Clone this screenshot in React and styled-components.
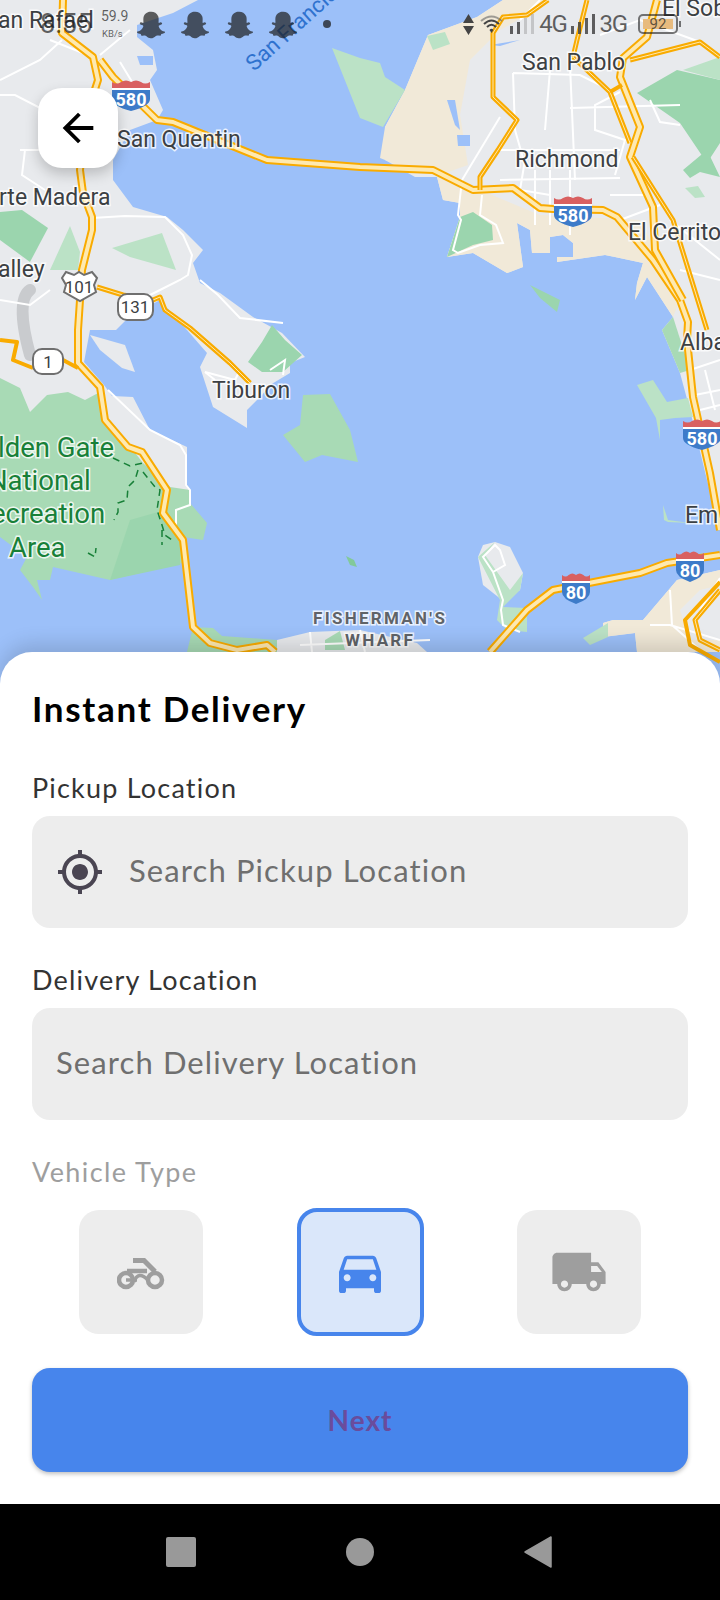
import React from "react";
import styled, { createGlobalStyle } from "styled-components";
import { FaSnapchatGhost } from "react-icons/fa";
import {
  MdArrowBack,
  MdGpsFixed,
  MdDirectionsCar,
  MdLocalShipping,
} from "react-icons/md";

const GlobalStyle = createGlobalStyle`
  html, body { margin: 0; padding: 0; background: #fff; }
  * { box-sizing: border-box; }
`;

const WATER = "#9cc0f9";
const LAND = "#e8eaed";
const SAND = "#f1e9d8";
const GREEN = "#a8dab5";
const GREEN_LIGHT = "#bbe2c6";
const GREEN_DARK = "#9bd5ae";

const landShapes = [
  "M0,0 L198,0 173,13 137,25 137,37 153,50 157,70 150,80 163,110 157,120 130,130 113,160 113,180 133,207 167,217 183,230 203,250 193,263 200,283 220,293 253,317 282,333 305,357 290,363 290,373 270,385 262,395 247,410 247,428 213,407 200,367 207,353 187,330 160,300 130,316 116,330 90,330 84,362 104,385 112,396 133,397 150,430 187,447 187,487 190,490 190,503 80,520 0,400 Z",
  "M90,335 L125,345 135,372 122,368 100,350 Z",
  "M503,0 L720,0 720,530 707,480 690,410 680,373 662,330 673,317 647,277 635,300 637,283 643,263 615,257 605,255 557,262 557,257 573,257 573,243 563,235 550,237 550,253 532,253 530,230 517,223 523,267 507,273 473,253 447,257 460,217 460,203 443,200 437,177 415,177 385,160 385,127 405,90 428,35 477,17 Z",
  "M720,570 L677,580 643,620 613,620 603,623 603,637 635,633 637,652 720,652 Z",
  "M478,557 L483,545 495,542 510,547 523,573 520,590 502,600 483,585 Z",
  "M277,640 L310,632 360,630 417,643 427,652 277,652 Z",
];

const sandShapes = [
  "M503,0 L548,0 527,15 500,30 470,60 460,115 468,165 440,175 415,172 380,158 385,127 405,90 428,35 477,17 Z",
  "M437,177 L480,190 540,215 640,220 680,300 673,317 647,277 635,300 637,283 643,263 615,257 605,255 557,262 557,257 573,257 573,243 563,235 550,237 550,253 532,253 530,230 517,223 523,267 507,273 473,253 447,257 460,217 460,203 443,200 Z",
  "M720,570 L677,580 643,620 613,620 603,623 603,637 635,633 637,652 720,652 720,640 690,640 680,610 700,590 720,585 Z",
];

const greenShapes = [
  ["M0,378 L20,388 30,412 47,395 68,392 85,400 100,392 105,420 125,440 143,463 170,487 190,490 190,503 207,523 203,540 183,537 182,563 110,580 53,567 50,580 37,580 42,600 33,587 20,570 27,557 0,537 Z", GREEN],
  ["M130,520 L165,510 180,540 180,565 110,580 120,550 Z", GREEN_DARK],
  ["M302,355 L283,372 262,372 248,362 262,342 272,325 285,340 Z", GREEN_DARK],
  ["M303,395 L330,394 350,430 358,462 322,455 305,462 283,435 300,425 Z", GREEN],
  ["M112,248 L162,233 176,270 130,257 Z", GREEN_LIGHT],
  ["M50,270 L70,226 80,252 78,270 Z", GREEN_LIGHT],
  ["M0,212 L22,210 48,228 30,262 0,240 Z", GREEN_DARK],
  ["M332,48 L360,58 380,63 385,77 405,90 383,127 360,118 Z", GREEN_LIGHT],
  ["M427,36 L445,32 450,44 433,50 Z", GREEN_LIGHT],
  ["M460,217 L473,212 492,225 493,240 473,245 447,257 Z", GREEN_DARK],
  ["M637,93 L677,70 720,80 720,143 707,163 680,123 Z", GREEN_DARK],
  ["M683,70 L720,57 720,80 Z", GREEN_LIGHT],
  ["M683,170 L707,150 720,177 700,172 690,178 Z", GREEN_DARK],
  ["M685,188 L698,186 705,197 695,198 Z", GREEN_LIGHT],
  ["M530,285 L560,300 557,312 540,298 Z", GREEN_DARK],
  ["M637,385 L653,380 667,402 688,398 693,417 675,418 660,420 660,440 656,418 Z", GREEN_LIGHT],
  ["M662,330 L673,317 690,370 680,373 Z", GREEN],
  ["M663,505 L668,520 690,523 668,522 664,520 Z", GREEN_LIGHT],
  ["M478,557 L495,542 485,555 510,590 523,573 520,590 503,607 527,608 527,632 507,630 497,620 500,600 Z", GREEN_LIGHT],
  ["M583,638 L608,623 608,637 590,645 Z", GREEN_LIGHT],
  ["M187,652 L193,627 213,628 222,636 277,640 277,652 Z", GREEN],
  ["M325,640 L340,631 345,650 325,650 Z", GREEN],
  ["M346,556 L354,560 357,567 350,565 Z", "#82c99a"],
];

const waterPatches = [
  "M137,56 L153,56 153,65 140,65 Z",
  "M457,135 L470,135 470,146 458,146 Z",
  "M447,100 L455,100 460,130 455,125 Z",
  "M490,45 L520,40 500,46 Z",
];

const whiteRoads = [
  "M0,95 L15,95 40,108 75,105 M20,150 L85,150 M25,150 L22,175 45,190 M0,80 L40,60 62,40 M50,40 L93,57 M62,0 L60,30 M130,30 L100,55 M120,62 L137,90",
  "M92,218 L125,216 165,217 183,235 192,255 188,275 180,280 160,290 130,305",
  "M200,280 L218,295 240,318 283,323 M0,300 L30,305 50,290",
  "M205,372 L235,380 240,370 M108,390 L150,430 180,445 186,455 186,485 190,490 190,505 176,510 176,530",
  "M540,0 L520,20 M600,35 L640,20 700,42",
  "M513,73 L515,130 M513,73 L580,75 610,90 M550,70 L545,130 M570,108 L680,105 M570,65 L575,180 M620,92 L595,105 595,130 625,140 615,175 M515,130 L525,165 M525,160 L520,190 550,195 M495,150 L620,150 M500,180 L620,178 M535,170 L535,225 M550,170 L550,225 M570,170 L570,235 M610,195 L650,195",
  "M500,117 L462,180 M462,180 L458,215 461,220 453,250 458,253 480,245 503,243 496,225 480,215 482,195",
  "M650,100 L660,122 680,125 M670,220 L720,260 M620,220 L660,205 M680,270 L720,280",
  "M690,370 L720,360 M695,395 L720,390 M705,370 L715,410 M700,410 L720,405",
  "M495,545 L483,557 493,572 505,565 500,550 Z M493,572 L503,600 501,610 503,625 520,632",
  "M720,578 L700,610 M650,625 L670,625 720,640 M670,590 L672,625 700,650",
  "M205,372 L215,380 M270,370 L285,360 283,375",
  "M300,645 L430,640 M310,632 L312,652 M360,630 L365,652",
];

const faintRoads = ["M30,290 Q15,300 30,355"];

const highways = [
  ["M63,0 L62,33 93,57 98,80 85,120 80,170 83,193 92,217 92,230 82,270 78,330 78,363 100,387 105,420 128,447 142,452 167,490 163,513 183,540 193,627 210,643 237,650 267,645 275,652", 8],
  ["M100,60 L113,77 157,120 173,122 200,133 267,160 360,167 433,170 473,190 513,188 540,208 553,209 603,210 617,217 653,260 680,300 688,322 687,340 693,397 710,473 720,530", 8],
  ["M657,0 L647,37 623,58 620,77 640,127 630,157 653,207 655,250 683,300", 8],
  ["M630,60 L700,42 720,57", 5],
  ["M573,57 L610,92 630,143", 5],
  ["M587,0 L577,40 573,57", 5],
  ["M633,157 L673,220 707,330", 5],
  ["M548,0 L527,15 503,17 493,33 493,97 517,120 498,150 480,177 480,190", 5],
  ["M97,287 L123,295 153,300 160,297 165,310 190,328 230,363 250,383", 5],
  ["M0,340 L17,342 13,360 33,368 M63,360 L78,368", 4],
  ["M490,652 L527,610 553,590 640,573 667,563 720,555", 8],
  ["M720,590 L695,620 700,640 720,650", 5],
  ["M720,582 L685,620 690,645 720,662", 4],
  ["M610,92 L622,85", 4],
];

const placeLabels = [
  ["an Rafael", -2, 28],
  ["San Quentin", 117, 147],
  ["rte Madera", -1, 205],
  ["alley", -2, 277],
  ["Tiburon", 212, 398],
  ["San Pablo", 522, 70],
  ["Richmond", 515, 167],
  ["El Cerrito", 628, 240],
  ["El Sob", 662, 16],
  ["Alba", 680, 350],
  ["Em", 685, 523],
];

const parkLabels = [
  ["lden Gate", -2, 457],
  ["National", -12, 490],
  ["ecreation", -9, 523],
  ["Area", 9, 557],
];

const trailPaths = [
  "M113,458 L130,466 143,463 M138,470 L135,480 128,487 127,500 118,503 118,512 114,520 M143,472 L155,487 160,490 157,510 162,525 165,535 175,542 M162,530 L162,545 M88,553 L95,557 96,548",
];

const MapFrame = styled.div`
  height: 684px;
  background: ${WATER};
  overflow: hidden;
`;

const MapCanvas = styled.svg`
  display: block;
  width: 720px;
  height: 684px;
`;

const PlaceText = styled.text`
  font-family: Roboto, sans-serif;
  font-size: 23px;
  fill: #3c4043;
  stroke: rgba(255, 255, 255, 0.8);
  stroke-width: 3px;
  paint-order: stroke;
`;

const ParkText = styled(PlaceText)`
  font-size: 27.5px;
  fill: #188038;
`;

const BayText = styled(PlaceText)`
  font-size: 22px;
  fill: #2f72cf;
  stroke: none;
`;

const DistrictText = styled(PlaceText)`
  font-size: 17px;
  font-weight: 700;
  letter-spacing: 2.3px;
  fill: #5f6368;
`;

const ShieldText = styled.text`
  font-family: Roboto, sans-serif;
  font-size: 18px;
  font-weight: 700;
  fill: #fff;
  text-anchor: middle;
`;

const RouteText = styled(ShieldText)`
  font-weight: 400;
  fill: #3c4043;
  font-size: 17px;
`;

const Highway = ({ d, width }) => (
  <>
    <path d={d} fill="none" stroke="#f9ab00" strokeWidth={width} strokeLinejoin="round" />
    <path d={d} fill="none" stroke="#fee9b0" strokeWidth={width - 4} strokeLinejoin="round" />
  </>
);

const Interstate = ({ x, y, width, label }) => (
  <g transform={`translate(${x} ${y})`}>
    <g transform={`scale(${width / 38} 1)`}>
      <path d="M0,9 L0,3 Q5,6 9,3 Q14,0 19,3 Q24,0 29,3 Q33,6 38,3 L38,9 Z" fill="#d96060" />
      <rect x="0" y="9" width="38" height="2" fill="#fff" />
      <path d="M0,11 H38 V20 Q38,27 19,32 Q0,27 0,20 Z" fill="#3d7bc9" />
    </g>
    <ShieldText x={width / 2} y={27}>{label}</ShieldText>
  </g>
);

const RoadMap = () => (
  <MapCanvas viewBox="0 0 720 684">
    {landShapes.map((d, i) => <path key={i} d={d} fill={LAND} />)}
    {sandShapes.map((d, i) => <path key={i} d={d} fill={SAND} />)}
    {greenShapes.map(([d, fill], i) => <path key={i} d={d} fill={fill} />)}
    {waterPatches.map((d, i) => <path key={i} d={d} fill={WATER} />)}
    {faintRoads.map((d, i) => (
      <path key={i} d={d} fill="none" stroke="#c9cbce" strokeWidth="12" strokeLinecap="round" />
    ))}
    {whiteRoads.map((d, i) => (
      <path key={i} d={d} fill="none" stroke="#fff" strokeWidth="2" />
    ))}
    {trailPaths.map((d, i) => (
      <path key={i} d={d} fill="none" stroke="#188038" strokeWidth="1.5" strokeDasharray="7 5" />
    ))}
    {highways.map(([d, width], i) => <Highway key={i} d={d} width={width} />)}

    <Interstate x={112} y={79} width={38} label="580" />
    <Interstate x={554} y={195} width={38} label="580" />
    <Interstate x={683} y={418} width={38} label="580" />
    <Interstate x={562} y={572} width={28} label="80" />
    <Interstate x={676} y={550} width={28} label="80" />

    <path d="M66,272 L74,275 79,272 84,275 92,272 97,278 94,285 96,292 80,301 64,292 66,285 62,278 Z" fill="#fff" stroke="#6f6f6f" strokeWidth="2" />
    <RouteText x="79" y="293">101</RouteText>
    <rect x="118" y="294" width="35" height="26" rx="9" fill="#fff" stroke="#6f6f6f" strokeWidth="2" />
    <RouteText x="135" y="313">131</RouteText>
    <rect x="33" y="349" width="30" height="25" rx="9" fill="#fff" stroke="#6f6f6f" strokeWidth="2" />
    <RouteText x="48" y="368">1</RouteText>

    {placeLabels.map(([label, x, y]) => <PlaceText key={label} x={x} y={y}>{label}</PlaceText>)}
    {parkLabels.map(([label, x, y]) => <ParkText key={label} x={x} y={y}>{label}</ParkText>)}
    <BayText transform="translate(254 72) rotate(-42)">San Francisco</BayText>
    <DistrictText x="313" y="624">FISHERMAN'S</DistrictText>
    <DistrictText x="345" y="646">WHARF</DistrictText>
  </MapCanvas>
);

const Screen = styled.div`
  position: relative;
  width: 720px;
  height: 1600px;
  overflow: hidden;
  font-family: Lato, "Noto Sans", sans-serif;
`;

const StatusBar = styled.div`
  position: absolute;
  top: 0;
  left: 0;
  width: 720px;
  height: 48px;
  padding: 0 40px;
  display: flex;
  align-items: center;
  font-family: Roboto, sans-serif;
  color: rgba(30, 30, 30, 0.7);
`;

const Clock = styled.span`
  font-size: 27px;
  width: 61px;
  margin-top: -1px;
`;

const Speed = styled.div`
  width: 36px;
  display: flex;
  flex-direction: column;
  align-items: flex-start;
  font-size: 14px;
  line-height: 16px;
  gap: 4px;
  small {
    font-size: 9.5px;
    line-height: 12px;
    margin-left: 1px;
  }
`;

const Ghosts = styled.div`
  display: flex;
  gap: 16px;
  font-size: 28px;
  padding-top: 2px;
`;

const Dot = styled.span`
  width: 8px;
  height: 8px;
  border-radius: 50%;
  margin-left: 26px;
  background: rgba(30, 30, 30, 0.75);
`;

const StatusRight = styled.div`
  margin-left: auto;
  margin-right: 2px;
  display: flex;
  align-items: center;
  gap: 3px;
  font-size: 24px;
  letter-spacing: -1.2px;
`;

const GlyphSlot = styled.span`
  display: flex;
  margin-right: 3px;
`;

const BatteryBox = styled.span`
  position: relative;
  width: 40px;
  height: 20px;
  margin-left: 8px;
  border: 2px solid rgba(30, 30, 30, 0.6);
  border-radius: 5px;
  font-size: 15px;
  line-height: 16px;
  letter-spacing: 0;
  text-align: center;
  background: linear-gradient(#e8bb7e, #e8bb7e) no-repeat 3px 3px / 30px 10px;
  &::after {
    content: "";
    position: absolute;
    right: -5px;
    top: 5px;
    width: 2px;
    height: 6px;
    background: rgba(30, 30, 30, 0.6);
  }
`;

const BackButton = styled.button`
  position: absolute;
  top: 88px;
  left: 38px;
  width: 80px;
  height: 80px;
  border: none;
  padding: 0;
  border-radius: 24px;
  background: #fff;
  color: #000;
  font-size: 46px;
  display: flex;
  align-items: center;
  justify-content: center;
  box-shadow: 0 6px 14px rgba(0, 0, 0, 0.2);
`;

const Sheet = styled.section`
  position: relative;
  height: 852px;
  margin-top: -32px;
  padding: 34px 32px 0 32px;
  background: #fff;
  border-radius: 32px 32px 0 0;
  box-shadow: 0 -8px 20px rgba(0, 0, 0, 0.14);
`;

const Title = styled.h1`
  margin: 0 0 40px;
  font-size: 35px;
  line-height: 44px;
  font-weight: 700;
  letter-spacing: 1.7px;
  color: #000;
`;

const FieldLabel = styled.div`
  font-size: 27px;
  line-height: 36px;
  letter-spacing: ${(p) => (p.$muted ? "1.4px" : "1.2px")};
  color: ${(p) => (p.$muted ? "#9e9e9e" : "#333")};
  margin-bottom: ${(p) => (p.$muted ? "18px" : "10px")};
`;

const Field = styled.div`
  height: 112px;
  margin-bottom: 34px;
  padding: 0 24px 4px;
  display: flex;
  align-items: center;
  gap: 25px;
  border-radius: 18px;
  background: #ededed;
  font-size: 31px;
  letter-spacing: 1.1px;
  color: #6f6f6f;
  svg {
    color: #4a4552;
    flex: none;
    margin-top: 4px;
  }
`;

const VehicleRow = styled.div`
  display: flex;
  align-items: center;
  justify-content: space-between;
  padding: 0 47px;
`;

const VehicleTile = styled.div`
  width: ${(p) => (p.$active ? "127px" : "124px")};
  height: ${(p) => (p.$active ? "128px" : "124px")};
  display: flex;
  align-items: center;
  justify-content: center;
  border-radius: 20px;
  background: ${(p) => (p.$active ? "#dae7fa" : "#ededed")};
  border: ${(p) => (p.$active ? "4px solid #4785ec" : "none")};
  color: ${(p) => (p.$active ? "#4785ec" : "#9e9e9e")};
`;

const BikeIcon = styled.svg`
  width: 48px;
  height: 32px;
  margin-top: 4px;
`;

const NextButton = styled.button`
  display: block;
  width: 100%;
  height: 104px;
  margin-top: 32px;
  border: none;
  border-radius: 18px;
  background: #4785ec;
  color: #6a4c9c;
  font-family: inherit;
  font-size: 28px;
  font-weight: 700;
  letter-spacing: 1px;
  box-shadow: 0 2px 4px rgba(0, 0, 0, 0.25);
`;

const NavBar = styled.nav`
  position: relative;
  height: 96px;
  background: #000;
  display: flex;
  align-items: center;
  justify-content: center;
  gap: 150px;
  padding-right: 3px;
`;

const NavSquare = styled.span`
  width: 30px;
  height: 30px;
  border-radius: 2px;
  background: #999;
`;

const NavCircle = styled.span`
  width: 28px;
  height: 28px;
  border-radius: 50%;
  background: #999;
`;

const Scooter = () => (
  <BikeIcon viewBox="0 0 48 32" fill="none" stroke="currentColor">
    <path d="M16,2.5 H27 L38,13.5" strokeWidth="5" />
    <path d="M10,13 H30" strokeWidth="4.5" />
    <circle cx="9" cy="22" r="7" strokeWidth="4.5" />
    <circle cx="38" cy="22" r="7" strokeWidth="4.5" />
    <path d="M9,22 H20" strokeWidth="3.5" />
    <path d="M17,24 Q21,12 31,22" strokeWidth="3.5" />
  </BikeIcon>
);

const SignalBars = ({ faint }) => (
  <svg width="27" height="20" viewBox="0 0 27 20">
    <rect x="1" y="12" width="3" height="8" fill="#444" opacity="0.85" />
    <rect x="8" y="8" width="3" height="12" fill="#444" opacity="0.85" />
    <rect x="15" y="4" width="3" height="16" fill={faint ? "#999" : "#444"} opacity={faint ? 0.45 : 0.85} />
    <rect x="22" y="0" width="3" height="20" fill={faint ? "#999" : "#444"} opacity={faint ? 0.45 : 0.85} />
  </svg>
);

const WifiGlyph = () => (
  <svg width="23" height="19" viewBox="0 0 23 19">
    <path d="M1,6 Q11.5,-3 22,6" fill="none" stroke="#666" strokeOpacity="0.6" strokeWidth="2" />
    <path d="M4,9 Q11.5,2 19,9" fill="none" stroke="#444" strokeWidth="2" />
    <path d="M7,12 Q11.5,7.5 16,12" fill="none" stroke="#444" strokeWidth="2" />
    <path d="M9.5,15 Q11.5,12.5 13.5,15 L11.5,18 Z" fill="#444" />
  </svg>
);

const DataArrows = () => (
  <svg width="11" height="21" viewBox="0 0 11 21">
    <path d="M5.5,0 L11,9 H0 Z M0,12 H11 L5.5,21 Z" fill="#444" />
  </svg>
);

const App = () => (
  <>
    <GlobalStyle />
    <Screen>
      <MapFrame>
        <RoadMap />
      </MapFrame>

      <StatusBar>
        <Clock>8:55</Clock>
        <Speed>
          59.9
          <small>KB/s</small>
        </Speed>
        <Ghosts>
          <FaSnapchatGhost />
          <FaSnapchatGhost />
          <FaSnapchatGhost />
          <FaSnapchatGhost />
        </Ghosts>
        <Dot />
        <StatusRight>
          <GlyphSlot>
            <DataArrows />
          </GlyphSlot>
          <GlyphSlot>
            <WifiGlyph />
          </GlyphSlot>
          <SignalBars faint />
          <span>4G</span>
          <SignalBars />
          <span>3G</span>
          <BatteryBox>92</BatteryBox>
        </StatusRight>
      </StatusBar>

      <BackButton aria-label="Back">
        <MdArrowBack />
      </BackButton>

      <Sheet>
        <Title>Instant Delivery</Title>
        <FieldLabel>Pickup Location</FieldLabel>
        <Field>
          <MdGpsFixed size={48} />
          Search Pickup Location
        </Field>
        <FieldLabel>Delivery Location</FieldLabel>
        <Field>Search Delivery Location</Field>
        <FieldLabel $muted>Vehicle Type</FieldLabel>
        <VehicleRow>
          <VehicleTile>
            <Scooter />
          </VehicleTile>
          <VehicleTile $active>
            <MdDirectionsCar size={56} />
          </VehicleTile>
          <VehicleTile>
            <MdLocalShipping size={58} />
          </VehicleTile>
        </VehicleRow>
        <NextButton>Next</NextButton>
      </Sheet>

      <NavBar>
        <NavSquare />
        <NavCircle />
        <svg width="28" height="32" viewBox="0 0 28 32">
          <path d="M27,1 V31 L1,16 Z" fill="#999" stroke="#999" strokeWidth="1.5" strokeLinejoin="round" />
        </svg>
      </NavBar>
    </Screen>
  </>
);

export default App;
